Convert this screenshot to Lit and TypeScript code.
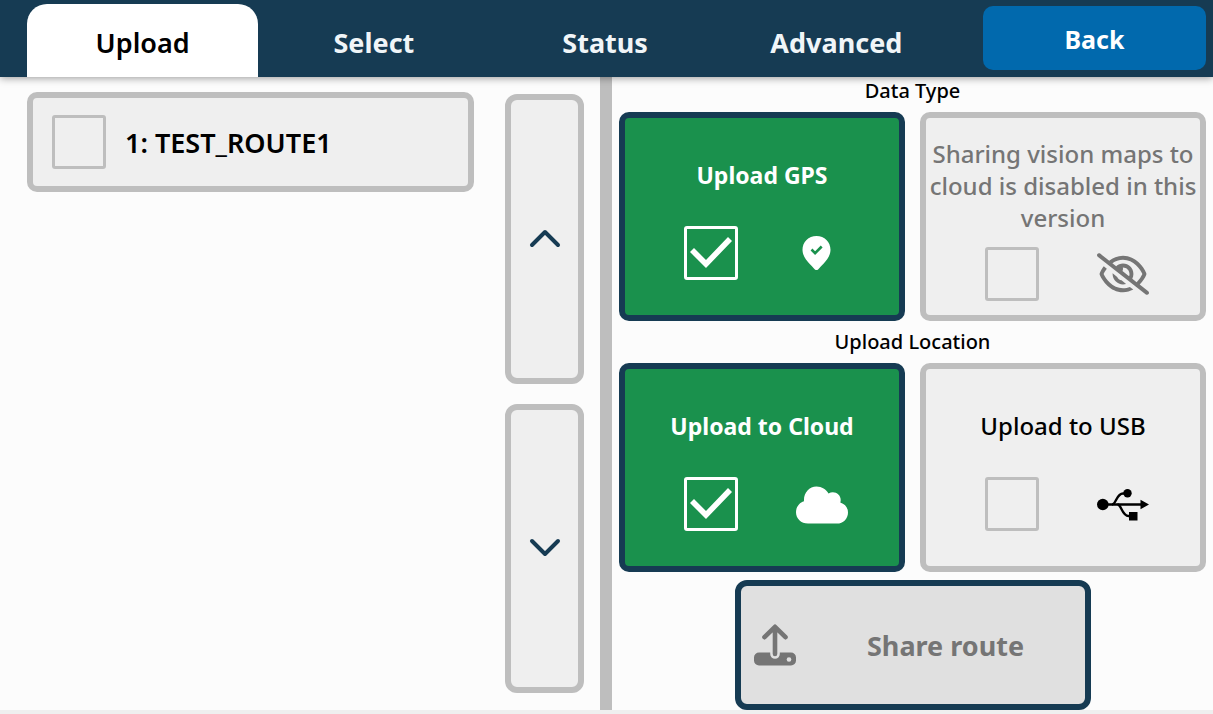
import { LitElement, html, svg, css, nothing } from "lit";
import { customElement, property, state } from "lit/decorators.js";
import { classMap } from "lit/directives/class-map.js";

type IconName = "pin" | "eye-off" | "cloud" | "usb";

const icons = {
  pin: svg`
    <path fill="currentColor" fill-rule="evenodd" d="M20.5 9C12.5 9 6.5 15 6.5 22.8c0 5.400 3.400 10 7 14 2 2.200 4 4.200 5.400 5.600q1.600 1.400 3.200 0c1.400-1.400 3.400-3.400 5.400-5.600 3.600-4 7-8.600 7-14C34.500 15 28.500 9 20.500 9z"/>
    <path fill="none" stroke="#1a914d" stroke-width="2.600" d="M15.500 22.500l3.600 3.600 6.600-6.600"/>`,
  "eye-off": svg`
    <path fill="currentColor" transform="translate(0 5.2) scale(0.08125)" d="M38.8 5.1C28.4-3.1 13.3-1.2 5.1 9.2S-1.2 34.7 9.2 42.9l592 464c10.4 8.2 25.5 6.3 33.7-4.1s6.3-25.5-4.1-33.7L525.6 386.7c39.6-40.6 66.4-86.1 79.9-118.4c3.3-7.9 3.3-16.7 0-24.6c-14.9-35.700-46.200-87.700-93-131.100C465.500 68.800 400.800 32 320 32c-68.200 0-125 26.300-169.300 60.800L38.800 5.100zm151 118.300C226 97.700 269.500 80 320 80c65.200 0 118.800 29.600 159.900 67.700C518.400 183.500 545 226 558.600 256c-12.600 28-36.600 66.800-70.900 100.900l-53.800-42.200c9.100-17.600 14.200-37.500 14.200-58.700c0-70.700-57.300-128-128-128c-32.200 0-61.700 11.900-84.200 31.500l-46.100-36.100zM394.900 284.200l-81.500-63.900c4.200-8.500 6.600-18.200 6.600-28.300c0-5.500-.7-10.900-2-16c.7 0 1.300 0 2 0c44.200 0 80 35.800 80 80c0 9.900-1.800 19.400-5.100 28.200zm9.400 130.300C378.800 425.400 350.700 432 320 432c-65.200 0-118.800-29.600-159.900-67.700C121.600 328.500 95 286 81.400 256c8.300-18.400 21.500-41.500 39.400-64.800L83.100 161.500C60.300 191.200 44 220.800 34.500 243.700c-3.300 7.900-3.300 16.700 0 24.600c14.900 35.700 46.200 87.700 93 131.100C174.500 443.200 239.200 480 320 480c47.400 0 89.900-12.900 126.500-33.100l-42.200-32.400zM192 256c0 70.700 57.300 128 128 128c13.300 0 26.100-2 38.200-5.800L302 334c-23.500-5.400-43.100-21.200-53.700-42.300l-56.100-44.200c-.2 2.800-.2 5.600-.2 8.500z"/>`,
  cloud: svg`
    <path fill="currentColor" d="M12 45.500C5 45.500 0 40.500 0 34.200 0 28.700 3.600 24.500 8 23.200 7.400 15 13 8.500 20.500 8.500c5.300 0 9.800 2.900 12 7 5.700-3.300 12.200.6 12.200 6.500 0 .9-.1 1.700-.4 2.400 4.600 1.300 7.700 5.300 7.700 10 0 6.200-4.800 11.100-11 11.100z"/>`,
  usb: svg`
    <g fill="none" stroke="currentColor" stroke-width="2.400">
      <path d="M5 26.500h40"/>
      <path d="M15 26.500c4 0 4.500-11 11-11h4"/>
      <path d="M20.500 26.500c4 0 4.500 11.500 11 11.500h3"/>
    </g>
    <circle cx="5.800" cy="26.500" r="5.800" fill="currentColor"/>
    <circle cx="30.500" cy="15.200" r="4.200" fill="currentColor"/>
    <path fill="currentColor" d="M32 34h8.500v8.500H32zM43.500 21.800l8.500 4.700-8.500 4.700z"/>`,
};

const tickBox = css`
  input[type="checkbox"] {
    appearance: none;
    box-sizing: border-box;
    flex: none;
    display: grid;
    width: 54px;
    height: 54px;
    margin: 0;
    border: 3px solid #bebebe;
    border-radius: 3px;
  }
  input[type="checkbox"]:checked {
    border-color: #fff;
  }
  input[type="checkbox"]:checked::before {
    content: "";
    background: #fff;
    clip-path: polygon(3px 23px, 7px 19px, 19px 31px, 41px 8px, 45px 12px, 19px 39px);
  }
`;

@customElement("option-card")
export class OptionCard extends LitElement {
  @property() label = "";
  @property() icon: IconName = "pin";
  @property({ type: Boolean }) checked = false;
  @property({ type: Boolean }) disabled = false;

  static styles = [
    tickBox,
    css`
      :host {
        display: flex;
        min-width: 0;
      }
      .card {
        box-sizing: border-box;
        flex: 1;
        display: flex;
        flex-direction: column;
        justify-content: space-evenly;
        align-items: center;
        padding-top: 6px;
        border: 6px solid #bebebe;
        border-radius: 10px;
        background: #efefef;
        color: #000;
        font-size: 24px;
        font-weight: 500;
        line-height: 32px;
        text-align: center;
      }
      .card.checked {
        border-color: #163b53;
        background: #1a914d;
        color: #fff;
        font-size: 23px;
        font-weight: 700;
      }
      .card.disabled {
        color: #757575;
      }
      .controls {
        display: flex;
        align-items: center;
        gap: 58px;
        padding-left: 8px;
      }
      .icon {
        display: block;
        width: 52px;
        height: 52px;
      }
    `,
  ];

  private toggle(e: Event) {
    this.checked = (e.target as HTMLInputElement).checked;
  }

  render() {
    return html`
      <label class=${classMap({ card: true, checked: this.checked, disabled: this.disabled })}>
        <span>${this.label}</span>
        <span class="controls">
          <input
            type="checkbox"
            .checked=${this.checked}
            ?disabled=${this.disabled}
            @change=${this.toggle}
          />
          <svg class="icon" viewBox="0 0 52 52" aria-hidden="true">${icons[this.icon]}</svg>
        </span>
      </label>
    `;
  }
}

@customElement("app-root")
export class AppRoot extends LitElement {
  @state() private tab = "Upload";

  private tabs = ["Upload", "Select", "Status", "Advanced"];
  private routes = ["TEST_ROUTE1"];

  static styles = [
    tickBox,
    css`
      :host {
        box-sizing: border-box;
        display: flex;
        flex-direction: column;
        min-height: 100vh;
        border-bottom: 4px solid #efefef;
        background: #fcfcfc;
        color: #000;
        font-family: "Noto Sans", "Open Sans", sans-serif;
      }
      button {
        margin: 0;
        padding: 0;
        border: 0;
        font: inherit;
        color: inherit;
      }
      .header {
        position: relative;
        z-index: 1;
        display: flex;
        height: 77px;
        padding: 0 7px 0 27px;
        gap: 31px;
        background: #163b53;
        box-shadow: 0 1px 8px rgba(0, 0, 0, 0.4);
        font-size: 27px;
        font-weight: 700;
      }
      .tabs {
        flex: 1;
        display: flex;
        padding-top: 4px;
      }
      .tab {
        flex: 1 1 0;
        padding-top: 4px;
        border-radius: 20px 20px 0 0;
        background: transparent;
        color: #f0f5f8;
      }
      .tab.active {
        background: #fff;
        color: #000;
        font-weight: 600;
      }
      .back {
        width: 223px;
        margin: 6px 0 7px;
        padding-top: 2px;
        border-radius: 10px;
        background: #0169ad;
        color: #fff;
        font-size: 25px;
      }
      .main {
        flex: 1;
        display: grid;
        grid-template-columns: 600fr 12px 601fr;
      }
      .divider {
        background: #bebebe;
      }
      .routes {
        display: flex;
        gap: 31px;
        padding: 0 16px 0 27px;
      }
      .list {
        flex: 1;
        margin: 0;
        padding: 15px 0;
        list-style: none;
      }
      .route {
        box-sizing: border-box;
        display: flex;
        align-items: center;
        gap: 19px;
        height: 100px;
        padding: 0 19px;
        border: 6px solid #bebebe;
        border-radius: 10px;
        background: #efefef;
        font-size: 27px;
        font-weight: 600;
      }
      .scroll {
        display: flex;
        flex-direction: column;
        gap: 20px;
        padding: 17px 0;
      }
      .scroll button {
        flex: 1;
        display: grid;
        place-items: center;
        width: 79px;
        border: 6px solid #bebebe;
        border-radius: 12px;
        background: #efefef;
        color: #163b53;
      }
      .options {
        display: flex;
        flex-direction: column;
        gap: 7px;
        padding: 0 7px;
      }
      .heading {
        margin: 0;
        font-size: 20px;
        font-weight: 500;
        line-height: 28px;
        text-align: center;
      }
      .cards {
        flex: 1;
        display: grid;
        grid-template-columns: 1fr 1fr;
        gap: 15px;
      }
      .share {
        align-self: center;
        display: flex;
        align-items: center;
        gap: 11px;
        width: 356px;
        height: 130px;
        margin-top: 1px;
        padding-left: 13px;
        border: 6px solid #163b53;
        border-radius: 12px;
        background: #e0e0e0;
        color: #757575;
        font-size: 27px;
        font-weight: 700;
      }
      .share span {
        flex: 1;
      }
    `,
  ];

  render() {
    return html`
      <header class="header">
        <nav class="tabs">
          ${this.tabs.map(
            (name) => html`
              <button
                type="button"
                class=${classMap({ tab: true, active: name === this.tab })}
                aria-current=${name === this.tab ? "page" : nothing}
                @click=${() => (this.tab = name)}
              >${name}</button>
            `
          )}
        </nav>
        <button type="button" class="back">Back</button>
      </header>
      <main class="main">
        <section class="routes">
          <ul class="list">
            ${this.routes.map(
              (name, i) => html`
                <li>
                  <label class="route"><input type="checkbox" />${i + 1}: ${name}</label>
                </li>
              `
            )}
          </ul>
          <div class="scroll">
            <button type="button" aria-label="Scroll up">
              <svg width="32" height="20" viewBox="0 0 32 20" fill="none" stroke="currentColor" stroke-width="4" stroke-linecap="round" stroke-linejoin="round">
                <path d="M3 16L16 3l13 13" />
              </svg>
            </button>
            <button type="button" aria-label="Scroll down">
              <svg width="32" height="20" viewBox="0 0 32 20" fill="none" stroke="currentColor" stroke-width="4" stroke-linecap="round" stroke-linejoin="round">
                <path d="M3 3l13 13 13-13" />
              </svg>
            </button>
          </div>
        </section>
        <div class="divider"></div>
        <section class="options">
          <h2 class="heading">Data Type</h2>
          <div class="cards">
            <option-card label="Upload GPS" icon="pin" checked></option-card>
            <option-card
              label="Sharing vision maps to cloud is disabled in this version"
              icon="eye-off"
              disabled
            ></option-card>
          </div>
          <h2 class="heading">Upload Location</h2>
          <div class="cards">
            <option-card label="Upload to Cloud" icon="cloud" checked></option-card>
            <option-card label="Upload to USB" icon="usb"></option-card>
          </div>
          <button type="button" class="share" disabled>
            <svg width="42" height="42" viewBox="0 0 42 42" aria-hidden="true">
              <path fill="currentColor" d="M5 28.500h11.200v1.500a4.800 4.800 0 0 0 9.600 0v-1.500H37a5 5 0 0 1 5 5v3a5 5 0 0 1-5 5H5a5 5 0 0 1-5-5v-3a5 5 0 0 1 5-5z" />
              <circle cx="35" cy="35.500" r="2.300" fill="#e0e0e0" />
              <path fill="none" stroke="currentColor" stroke-width="4.600" stroke-linecap="round" stroke-linejoin="round" d="M21 30V3.500M10.500 13.200L21 2.800l10.500 10.400" />
            </svg>
            <span>Share route</span>
          </button>
        </section>
      </main>
    `;
  }
}
